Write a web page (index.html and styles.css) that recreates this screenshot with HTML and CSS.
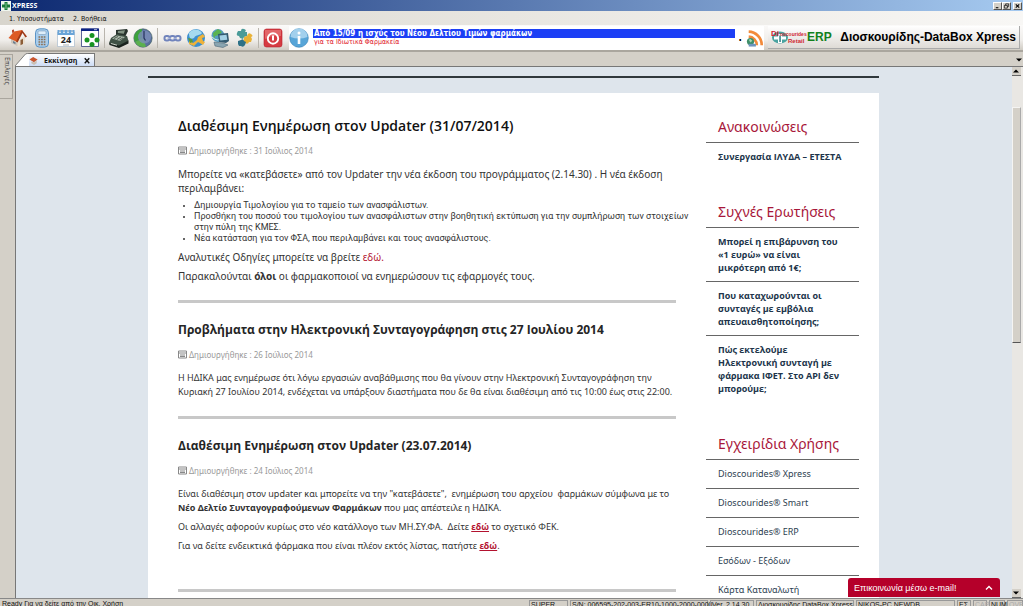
FILE: index.html
```html
<!DOCTYPE html>
<html lang="el">
<head>
<meta charset="utf-8">
<title>XPRESS</title>
<link rel="stylesheet" href="styles.css">
</head>
<body>
<div class="app">
  <header class="titlebar">
    <svg class="app-icon" viewBox="0 0 10 10" aria-hidden="true"><path fill="#eef5ee" d="M0 0h10v10H0z"/><path fill="#187a38" d="M3.500 1h3v2.500H9v3H6.500V9h-3V6.500H1v-3h2.500z"/><path fill="#7fc48e" d="M4.500 2h1v6h-1z"/></svg>
    <span class="app-name">XPRESS</span>
    <div class="window-buttons">
      <button class="win-btn" aria-label="Minimize"><svg viewBox="0 0 8 7"><path d="M2 5.500h3" stroke="#000" stroke-width="1.200"/></svg></button>
      <button class="win-btn" aria-label="Restore"><svg viewBox="0 0 8 7" fill="none" stroke="#000" stroke-width=".8"><path d="M3 2.500V1h3.500v3H5M1.500 2.800h3.500V6H1.500z"/></svg></button>
      <button class="win-btn win-close" aria-label="Close"><svg viewBox="0 0 8 7"><path d="M2 1.500l4 4M6 1.500l-4 4" stroke="#000" stroke-width="1.200"/></svg></button>
    </div>
  </header>

  <nav class="menubar">
    <button>1. Υποσυστήματα</button>
    <button>2. Βοήθεια</button>
  </nav>

  <div class="toolbar">
    <button class="tool" aria-label="Home"><svg viewBox="0 0 20 20"><path d="M3 9l7 4v5.500L3 15z" fill="#cfc6ba"/><path d="M9.500 13l7.500-5v7l-7.500 4z" fill="#e9dfcf"/><path d="M.5 10L6 3.500l8-1.500.5 1L9.500 14z" fill="#dd5a24"/><path d="M14 2l5 6.500-1.500 1L14.500 5l-5 9.500-1.500-1z" fill="#a03a17"/><path d="M4 5V2l2-.5V4z" fill="#b4472a"/><path d="M12.500 12l2.500-1.200V16l-2.500 1.300z" fill="#8b5d38"/><path d="M5 13l2.500 1.200v2L5 15z" fill="#6a7f92"/></svg></button>
    <button class="tool" aria-label="Calculator"><svg viewBox="0 0 20 20"><rect x="3.500" y=".8" width="13" height="18.400" rx="4" fill="#a9cdec" stroke="#5b94c6"/><rect x="6" y="3" width="8" height="3.500" rx="1" fill="#dfeefa" stroke="#6b8fb0" stroke-width=".5"/><path d="M6.500 9h7M6.500 11.500h7M6.500 14h7M6.500 16.500h7" stroke="#8a6f56" stroke-width="1.600" stroke-dasharray="1.700 .9"/></svg></button>
    <button class="tool" aria-label="Calendar"><svg viewBox="0 0 20 20"><path fill="#fff" stroke="#a9bccd" stroke-width=".7" d="M1.500 4h17v14.500h-17z"/><path fill="#6aa5d8" d="M1.500 2h17v5h-17z"/><path d="M4 1v4M8 1v4M12 1v4M16 1v4" stroke="#fff" stroke-width="1.300"/><path d="M4 2v2M8 2v2M12 2v2M16 2v2" stroke="#315e8d" stroke-width=".6"/><text x="10" y="15" text-anchor="middle" class="cal-day">24</text><path d="M7 17h6" stroke="#999" stroke-width=".8"/></svg></button>
    <button class="tool" aria-label="Modules"><svg viewBox="0 0 20 20"><path fill="#fff" stroke="#17256e" stroke-width=".7" d="M1.500 1h17v17.500h-17z"/><path fill="#0a2184" d="M1 .5h18V3H1z"/><path d="M14 1.700h3" stroke="#fff" stroke-width=".7"/><g fill="#189321"><circle cx="12" cy="7.500" r="2.500"/><circle cx="7" cy="12" r="2.500"/><circle cx="12" cy="16.500" r="2.500"/><circle cx="17" cy="12" r="2.500"/></g></svg></button>
    <span class="separator"></span>
    <button class="tool" aria-label="Cash register"><svg viewBox="0 0 20 20"><path d="M7 2l11-1 1 2-3 6-9-2z" fill="#28332d"/><path d="M9 3l7-.8-1.200 3.500-6-.8z" fill="#829383"/><path d="M2 10l6-4 10 2 1.500 5-10 6L0 15z" fill="#3f5145"/><path d="M3 10.500l5-3 8 1.500-5 4z" fill="#a8b6a8"/><path d="M5 10.500l4-2M8 11.500l4-2.500M10.500 12l3.500-2" stroke="#2b382f" stroke-width=".7"/><path d="M0 15l10 2.500 9.500-5v3L10 20 .5 17z" fill="#19221d"/><path d="M2 15.500l6 1.700" stroke="#cbd2c8"/></svg></button>
    <button class="tool" aria-label="Clock"><svg viewBox="0 0 20 20"><circle cx="10" cy="10" r="9.200" fill="#59709e" stroke="#3a5b55" stroke-width=".6"/><path d="M9 10V1a9 9 0 0 0-7 13z" fill="#3da23c"/><path d="M10 10l-8 4a9 9 0 0 0 11 4.500z" fill="#5bb04e"/><circle cx="11.500" cy="9" r="6.500" fill="#7c8eb9" opacity=".8"/><path d="M11 3v7l1.500 2.500" fill="none" stroke="#26345c" stroke-width="1.200"/></svg></button>
    <span class="separator"></span>
    <button class="tool" aria-label="Links"><svg viewBox="0 0 20 20" fill="none"><g stroke="#7184bc" stroke-width="2"><rect x="2.500" y="8" width="5" height="4.500" rx="2"/><rect x="8" y="8" width="5" height="4.500" rx="2"/><rect x="13.500" y="8" width="5" height="4.500" rx="2"/></g><path d="M5 10.200h4M11 10.200h4" stroke="#b8c3e5"/></svg></button>
    <button class="tool" aria-label="Web"><svg viewBox="0 0 20 20"><circle cx="10" cy="10" r="9" fill="#3c8fce"/><path d="M3 5c3-4 9-5 13 0-2 3-6 1-8 5-4 2-5-1-5-5z" fill="#a5daef"/><path d="M3 12l4 3 4-3 1-3 5-3 2 3-3 1 1 3 2 1-2 3-3-2-2-1-4 4-5-2z" fill="#eeb23a"/><path d="M2 10l4 1 1 3-3 1z" fill="#5c9b3b"/></svg></button>
    <button class="tool" aria-label="Network"><svg viewBox="0 0 20 20"><circle cx="8" cy="7.500" r="6.500" fill="#559cc1"/><path d="M3 5l5-4 4 3-3 3-4 1-1 4z" fill="#5bb34f"/><path d="M2 9q6 6 11 0" stroke="#d2edf3" fill="none"/><path d="M8 6l10-1 1 8-3 2-7-1z" fill="#345a70"/><path d="M9.500 7.500l7-.8.800 5-7 .8z" fill="#a3d0e5"/><path d="M4 14l9 1 5 2-5 2.500-8-1.500z" fill="#8aa5b1" stroke="#4a6575" stroke-width=".6"/></svg></button>
    <button class="tool" aria-label="Plugins"><svg viewBox="0 0 20 20"><path d="M4 3l3 0q0-3 3-2t1 3l2 0 0 4-3 1-1 2-3-1-1-2q-3 0-2-3z" fill="#4b9b98"/><path d="M10 9l3-1q1-4 4-2t0 3l1 2-1 3-2 0q-1 3-4 1l-2-2 1-2z" fill="#e9b237"/><path d="M4 13l3-1q2-2 3 1l2 1-1 3q-2 3-4 1l-2 0-1-2z" fill="#2e7187"/></svg></button>
    <span class="separator"></span>
    <button class="tool" aria-label="Exit"><svg viewBox="0 0 20 20"><rect x="1" y="1" width="18" height="18" rx="2.500" fill="#d63b42" stroke="#b5202b" stroke-width=".6"/><path d="M2 2h16v6Q9 7 2 11z" fill="#ed8a8b" opacity=".55"/><circle cx="10" cy="10.500" r="5.200" fill="none" stroke="#fff" stroke-width="1.900"/><path d="M10 7.500v5" stroke="#fff" stroke-width="2"/></svg></button>
    <div class="news">
      <svg class="info" viewBox="0 0 20 20" aria-hidden="true"><circle cx="10" cy="10" r="9.300" fill="#57a5d8" stroke="#3b83b6" stroke-width=".6"/><path d="M1.500 9a8.500 8.500 0 0 1 17 0Q10 12 1.500 9z" fill="#a2d0ed"/><circle cx="10" cy="5" r="1.500" fill="#fff"/><path d="M10 8v8" stroke="#fff" stroke-width="2.600"/></svg>
      <div class="news-text">
        <strong>Από 15/09 η ισχύς του Νέου Δελτίου Τιμών φαρμάκων</strong>
        <span>για τα Ιδιωτικά Φαρμακεία</span>
      </div>
      <span class="news-dot">.</span>
      <svg class="rss" viewBox="0 0 20 20" aria-hidden="true"><g fill="none" stroke="#f28a3a" stroke-width="3"><path d="M3 3a15 15 0 0 1 14.500 15"/><path d="M3 8.500A9.500 9.500 0 0 1 12 18"/></g><circle cx="5" cy="14" r="4" fill="#3f8f6a"/><path d="M3 12l2-1 2 2-2 2z" fill="#a5d7b6"/><path d="M3 18h8" stroke="#6d94bd" stroke-width="3"/></svg>
    </div>
    <div class="brand">
      <svg class="logo" viewBox="0 0 62 16" role="img" aria-label="Dioscourides Retail ERP"><ellipse cx="9" cy="8.500" rx="8" ry="6" fill="#4aa3a0"/><path d="M7 5h4v2.500h4v3h-4V14H7v-3.500H3v-3h4z" fill="#fff"/><path d="M8.300 6.500h1.500V13H8.300z" fill="#257d82"/><text x="0" y="7" class="logo-d">Di</text><text x="9" y="7" class="logo-small">oscourides</text><text x="17" y="14" class="logo-retail">Retail</text><text x="36" y="12" class="logo-erp">ERP</text></svg>
      <span>Διοσκουρίδης-DataBox Xpress</span>
    </div>
  </div>

  <div class="workspace">
    <aside class="rail"><button class="rail-tab">Επιλογές</button></aside>
    <div class="document">
      <div class="tabs">
        <button class="tab">
          <svg class="tab-edge" viewBox="0 0 16 13" preserveAspectRatio="none" aria-hidden="true"><path d="M0 13L11 2q1-1.500 3-1.500h2V13z" fill="#fff"/><path d="M0 13L11 2q1-1.500 3-1.500h2" fill="none" stroke="#777"/></svg>
          <span class="tab-body"><svg viewBox="0 0 10 10" aria-hidden="true"><path d="M0 4l4-3 5 3-4 3z" fill="#c8552e"/><path d="M2 6l3 1 3-2v3L5 10 2 8z" fill="#c9bfb4"/></svg><span>Εκκίνηση</span><svg viewBox="0 0 8 8" aria-hidden="true"><path d="M2 2l4 4.500M6 2L2 6.500" stroke="#111" stroke-width="1.200"/></svg></span>
        </button>
        <button class="tab-menu" aria-label="Tabs"><svg viewBox="0 0 8 8"><path d="M1 2.500h6L4 5.500z"/></svg></button>
      </div>
      <div class="viewer">
        <div class="page">
          <div class="page-rule"></div>
          <div class="card">
            <main class="articles">
              <article>
                <h2 class="lead">Διαθέσιμη Ενημέρωση στον Updater (31/07/2014)</h2>
                <p class="meta"><svg viewBox="0 0 9 9"><path d="M.5 1h8v7h-8zM.5 3h8M2 5h5M2 6.500h5"/></svg>Δημιουργήθηκε : 31 Ιούλιος 2014</p>
                <div class="copy copy-large">
                  <p>Μπορείτε να «κατεβάσετε» από τον Updater την νέα έκδοση του προγράμματος (2.14.30) . Η νέα έκδοση<br>περιλαμβάνει:</p>
                  <ul>
                    <li>Δημιουργία Τιμολογίου για το ταμείο των ανασφάλιστων.</li>
                    <li>Προσθήκη του ποσού του τιμολογίου των ανασφάλιστων στην βοηθητική εκτύπωση για την συμπλήρωση των στοιχείων<br>στην πύλη της ΚΜΕΣ.</li>
                    <li>Νέα κατάσταση για τον ΦΣΑ, που περιλαμβάνει και τους ανασφάλιστους.</li>
                  </ul>
                  <p>Αναλυτικές Οδηγίες μπορείτε να βρείτε <a href="#">εδώ.</a></p>
                  <p>Παρακαλούνται <b>όλοι</b> οι φαρμακοποιοί να ενημερώσουν τις εφαρμογές τους.</p>
                </div>
              </article>
              <article>
                <h2>Προβλήματα στην Ηλεκτρονική Συνταγογράφηση στις 27 Ιουλίου 2014</h2>
                <p class="meta"><svg viewBox="0 0 9 9"><path d="M.5 1h8v7h-8zM.5 3h8M2 5h5M2 6.500h5"/></svg>Δημιουργήθηκε : 26 Ιούλιος 2014</p>
                <div class="copy">
                  <p>Η ΗΔΙΚΑ μας ενημέρωσε ότι λόγω εργασιών αναβάθμισης που θα γίνουν στην Ηλεκτρονική Συνταγογράφηση την<br>Κυριακή 27 Ιουλίου 2014, ενδέχεται να υπάρξουν διαστήματα που δε θα είναι διαθέσιμη από τις 10:00 έως στις 22:00.</p>
                </div>
              </article>
              <article class="article-last">
                <h2>Διαθέσιμη Ενημέρωση στον Updater (23.07.2014)</h2>
                <p class="meta"><svg viewBox="0 0 9 9"><path d="M.5 1h8v7h-8zM.5 3h8M2 5h5M2 6.500h5"/></svg>Δημιουργήθηκε : 24 Ιούλιος 2014</p>
                <div class="copy">
                  <p>Είναι διαθέσιμη στον updater και μπορείτε να την "κατεβάσετε",&nbsp; ενημέρωση του αρχείου&nbsp; φαρμάκων σύμφωνα με το<br><b>Νέο Δελτίο Συνταγογραφούμενων Φαρμάκων</b> που μας απέστειλε η ΗΔΙΚΑ.</p>
                  <p>Οι αλλαγές αφορούν κυρίως στο νέο κατάλλογο των ΜΗ.ΣΥ.ΦΑ.&nbsp; Δείτε <a class="strong-link" href="#">εδώ</a> το σχετικό ΦΕΚ.</p>
                  <p>Για να δείτε ενδεικτικά φάρμακα που είναι πλέον εκτός λίστας, πατήστε <a class="strong-link" href="#">εδώ</a>.</p>
                </div>
              </article>
            </main>
            <aside class="sidebar">
              <section>
                <h3>Ανακοινώσεις</h3>
                <a class="bold" href="#">Συνεργασία ΙΛΥΔΑ – ΕΤΕΣΤΑ</a>
              </section>
              <section>
                <h3>Συχνές Ερωτήσεις</h3>
                <a class="bold" href="#">Μπορεί η επιβάρυνση του<br>«1 ευρώ» να είναι<br>μικρότερη από 1€;</a>
                <a class="bold" href="#">Που καταχωρούνται οι<br>συνταγές με εμβόλια<br>απευαισθητοποίησης;</a>
                <a class="bold" href="#">Πώς εκτελούμε<br>Ηλεκτρονική συνταγή με<br>φάρμακα ΙΦΕΤ. Στο API δεν<br>μπορούμε;</a>
              </section>
              <section>
                <h3>Εγχειρίδια Χρήσης</h3>
                <a href="#">Dioscourides® Xpress</a>
                <a href="#">Dioscourides® Smart</a>
                <a href="#">Dioscourides® ERP</a>
                <a href="#">Εσόδων - Εξόδων</a>
                <a href="#">Κάρτα Καταναλωτή</a>
              </section>
            </aside>
          </div>
        </div>
        <button class="contact"><span>Επικοινωνία μέσω e-mail!</span><svg viewBox="0 0 8 6"><path d="M1 4.500l3-3 3 3" fill="none" stroke="#fff" stroke-width="1.400"/></svg></button>
        <div class="scrollbar">
          <button aria-label="Scroll up"><svg viewBox="0 0 8 8"><path d="M1 5.500h6L4 2.500z"/></svg></button>
          <div class="track"><div class="thumb"></div></div>
          <button aria-label="Scroll down"><svg viewBox="0 0 8 8"><path d="M1 2.500h6L4 5.500z"/></svg></button>
        </div>
      </div>
    </div>
  </div>

  <footer class="statusbar">
    <span class="ready">Ready Για να δείτε από την Οικ. Χρήση</span>
    <span class="cell cell-user">SUPER</span>
    <span class="cell cell-serial">S/N: 006595-202-003-ER10-1000-2000-0000</span>
    <span class="cell cell-version">Ver. 2.14.30</span>
    <span class="cell cell-product">Διοσκουρίδης DataBox Xpress</span>
    <span class="cell cell-host">NIKOS-PC NEWDB</span>
    <span class="cell cell-lang">ΕΣ</span>
    <span class="cell cell-lang off">CAP</span>
    <span class="cell cell-num">NUM</span>
    <span class="cell cell-num off">OVR</span>
  </footer>
</div>
</body>
</html>
```

FILE: styles.css
```css
* { box-sizing: border-box; }

body {
  margin: 0;
  font-family: "DejaVu Sans Condensed", "DejaVu Sans", sans-serif;
  font-size: 7px;
  color: #111;
  background: #d4d0c8;
}

button {
  margin: 0;
  padding: 0;
  border: 0;
  background: none;
  color: inherit;
  font: inherit;
}

svg { display: block; }

.app {
  display: flex;
  flex-direction: column;
  height: 100vh;
  overflow: hidden;
}

/* Window frame */
.titlebar {
  display: flex;
  align-items: center;
  flex: none;
  height: 11px;
  padding: 0 1px;
  background: linear-gradient(90deg, #0c2870, #a6caf0);
}
.app-icon { width: 10px; height: 10px; }
.app-name {
  flex: 1;
  padding-left: 1px;
  color: #fff;
  font-family: "Open Sans", "Noto Sans", sans-serif;
  font-size: 7px;
  font-weight: 700;
}
.window-buttons { display: flex; }
.win-btn {
  width: 9px;
  height: 8px;
  border: 1px solid;
  border-color: #fff #555 #555 #fff;
  background: #d4d0c8;
}
.win-btn svg { width: 100%; height: 100%; }
.win-close { margin-left: 2px; }

.menubar {
  display: flex;
  align-items: center;
  flex: none;
  gap: 9px;
  height: 14px;
  padding: 1px 9px 0;
  background: linear-gradient(90deg, #d8d5cd, #f8f7f5);
}

.toolbar {
  display: flex;
  align-items: center;
  flex: none;
  gap: 4px;
  height: 27px;
  padding: 0 3px 0 8px;
  border-bottom: 2px solid #aaa69e;
  background: linear-gradient(#fbfaf9, #f0eeeb 60%, #d0ccc4);
}
.tool { flex: none; width: 20px; height: 20px; }
.tool svg { width: 20px; height: 20px; }
.separator {
  flex: none;
  width: 1px;
  height: 20px;
  background: #b9b5ad;
}
.cal-day { font: 700 9px "Open Sans", sans-serif; fill: #222; }

.news {
  display: flex;
  align-items: center;
  flex: 1;
  gap: 4px;
  height: 24px;
  margin-left: 2px;
  background: #fff;
}
.info { flex: none; width: 20px; height: 20px; }
.news-text {
  display: flex;
  flex-direction: column;
  flex: 1;
  height: 18px;
  font-family: "DejaVu Sans Condensed", sans-serif;
  font-size: 7px;
  line-height: 9px;
  color: #e0141e;
}
.news-text strong {
  padding-left: 1px;
  font-size: 8px;
  color: #fff;
  background: #1c3ff5;
}
.news-text span { padding-left: 1px; }
.news-dot { color: #000; font-size: 10px; font-weight: 700; }
.rss { flex: none; width: 18px; height: 18px; }

.brand {
  display: flex;
  align-items: center;
  flex: none;
  justify-content: space-between;
  width: 252px;
  height: 23px;
  padding: 0 3px;
  border-right: 1px solid #aaa;
  border-bottom: 1px solid #aaa;
  background: linear-gradient(#fff, #dedbd6);
  color: #000;
  font: 700 12px "Liberation Sans", Arial, sans-serif;
}
.logo { width: 62px; height: 16px; }
.logo text { font-family: "Liberation Sans", Arial, sans-serif; font-weight: 700; }
.logo-d { font-size: 8px; fill: #cf2630; }
.logo-small { font-size: 5px; fill: #cf2630; }
.logo-retail { font-size: 6px; fill: #cf2630; }
.logo-erp { font-size: 12px; fill: #12801c; }

/* Workspace */
.workspace { display: flex; flex: 1; min-height: 0; }
.rail { flex: none; width: 15px; padding-top: 2px; }
.rail-tab {
  width: 13px;
  height: 45px;
  padding-top: 2px;
  border: 1px solid #aaa69e;
  border-left: 0;
  color: #444;
  font-size: 7px;
  line-height: 9px;
  text-align: left;
  writing-mode: vertical-rl;
}
.document {
  display: flex;
  flex: 1;
  flex-direction: column;
  min-width: 0;
}
.tabs {
  display: flex;
  align-items: flex-end;
  justify-content: space-between;
  flex: none;
  height: 15px;
  border-bottom: 1px solid #777;
}
.tab { display: flex; height: 13px; }
.tab-edge { width: 14px; height: 13px; }
.tab-body {
  display: flex;
  align-items: center;
  gap: 5px;
  height: 13px;
  padding: 0 2px 0 0;
  border-top: 1px solid #777;
  border-right: 1px solid #777;
  background: linear-gradient(#fff, #cddcf5);
  font-family: "Open Sans", "Noto Sans", sans-serif;
  font-weight: 700;
}
.tab-body svg { width: 10px; height: 9px; }
.tab-menu { width: 8px; height: 12px; }

.viewer {
  position: relative;
  display: flex;
  flex: 1;
  min-height: 0;
  border-left: 1px solid #777;
  background: #dee5ec;
}
.page {
  flex: 1;
  padding: 9px 133px 0 132px;
  overflow: hidden;
  font-family: "Noto Sans", "Open Sans", sans-serif;
  color: #333;
}
.page-rule { height: 2px; background: #30383c; }
.card {
  display: flex;
  justify-content: space-between;
  gap: 30px;
  margin-top: 15px;
  padding: 23px 20px 40px 30px;
  background: #fff;
}
.articles { flex: 1; min-width: 0; white-space: nowrap; }

article {
  margin-bottom: 17px;
  padding-bottom: 12px;
  border-bottom: 3px solid #c8c8c8;
}
.article-last { padding-bottom: 31px; }
h2 {
  margin: 0 0 8px;
  color: #252525;
  font-family: "Open Sans", "Noto Sans", sans-serif;
  font-size: 12px;
  font-weight: 700;
  line-height: 20px;
}
.lead { color: #111; font-size: 14px; font-weight: 600; }
p { margin: 0 0 5px; }
.meta {
  display: flex;
  align-items: center;
  gap: 2px;
  margin-bottom: 10px;
  color: #999;
  font-size: 8px;
  line-height: 13px;
}
.meta svg {
  width: 9px;
  height: 9px;
  fill: none;
  stroke: #888;
}
.copy { font-size: 9px; line-height: 14px; }
.copy-large { font-size: 10px; }
.copy ul {
  margin: 5px 0 6px;
  padding-left: 16px;
  font-family: Roboto, "Noto Sans", sans-serif;
  font-size: 9px;
  line-height: 11px;
}
.copy li::marker { font-size: 7px; }
.copy a { color: #b3122f; text-decoration: none; }
.copy .strong-link { font-weight: 700; text-decoration: underline; }

.sidebar { flex: none; width: 153px; padding-top: 1px; }
.sidebar section { margin-bottom: 32px; }
.sidebar h3 {
  margin: 0;
  padding: 0 12px 5px;
  color: #a8173a;
  font-size: 14px;
  font-weight: 400;
  line-height: 20px;
}
.sidebar a {
  display: block;
  padding: 7px 0 8px 12px;
  border-top: 1px solid #666;
  color: #2c3e50;
  font-size: 9px;
  line-height: 13px;
  text-decoration: none;
  white-space: nowrap;
}
.sidebar .bold {
  padding-bottom: 7px;
  color: #20344a;
  font-family: "Open Sans", "Noto Sans", sans-serif;
  font-weight: 700;
}

.contact {
  position: absolute;
  right: 23px;
  bottom: 1px;
  display: flex;
  align-items: center;
  justify-content: space-between;
  width: 152px;
  height: 19px;
  padding: 0 7px 0 6px;
  border-radius: 3px 3px 0 0;
  background: #b5002a;
  color: #fff;
  font: 9px "Liberation Sans", Arial, sans-serif;
}
.contact svg { width: 8px; height: 6px; }

.scrollbar {
  display: flex;
  flex: none;
  flex-direction: column;
  width: 11px;
  padding-right: 2px;
  background: #e9e7e3;
}
.scrollbar button {
  height: 9px;
  border-bottom: 1px solid #666;
  background: #d4d0c8;
}
.scrollbar button svg { width: 8px; height: 8px; }
.track { flex: 1; padding-top: 31px; }
.thumb {
  height: 49%;
  border: 1px solid #f5f4f2;
  border-right-color: #aaa;
  border-bottom-color: #555;
  background: #d4d0c8;
}

/* Status bar */
.statusbar {
  display: flex;
  flex: none;
  align-items: flex-start;
  gap: 2px;
  height: 8px;
  padding-top: 1px;
  border-top: 1px solid #888;
  overflow: hidden;
  font-family: "Liberation Sans", Arial, sans-serif;
  line-height: 8px;
  white-space: nowrap;
}
.ready { flex: 1; padding-left: 2px; }
.cell {
  flex: none;
  height: 12px;
  padding-left: 1px;
  border: 1px solid #999;
  border-bottom: 0;
}
.cell-user { width: 39px; }
.cell-serial { width: 138px; }
.cell-version { width: 44px; }
.cell-product { width: 98px; }
.cell-host { width: 99px; }
.cell-lang { width: 14px; }
.cell-num { width: 16px; }
.off { color: #aaa; }
```
